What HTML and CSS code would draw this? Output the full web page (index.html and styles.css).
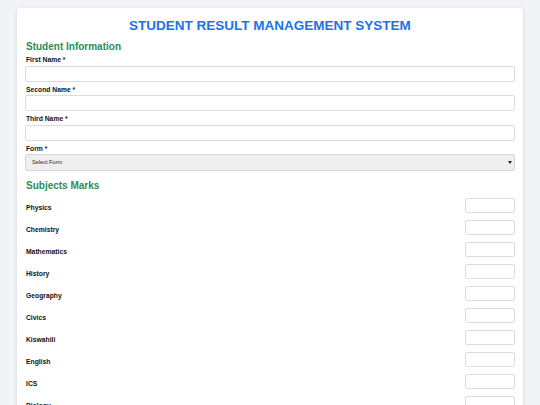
FILE: index.html
```html
<!DOCTYPE html>
<html lang="en">
<head>
<meta charset="utf-8">
<title>Student Result Management System</title>
<link rel="stylesheet" href="styles.css">
</head>
<body>
<div class="card">
  <h1 class="title">STUDENT RESULT MANAGEMENT SYSTEM</h1>
  <h2 class="section">Student Information</h2>
  <div class="field">
    <label class="label">First Name *</label>
    <input class="text-input" type="text">
  </div>
  <div class="field">
    <label class="label">Second Name *</label>
    <input class="text-input" type="text">
  </div>
  <div class="field">
    <label class="label">Third Name *</label>
    <input class="text-input" type="text">
  </div>
  <div class="field">
    <label class="label">Form *</label>
    <div class="select-wrap">
      <select class="select-input"><option>Select Form</option></select>
    </div>
  </div>
  <h2 class="section section-subjects">Subjects Marks</h2>
  <div class="subjects">
    <div class="subject-row"><span class="subject-name">Physics</span><input class="mark-input" type="text"></div>
    <div class="subject-row"><span class="subject-name">Chemistry</span><input class="mark-input" type="text"></div>
    <div class="subject-row"><span class="subject-name">Mathematics</span><input class="mark-input" type="text"></div>
    <div class="subject-row"><span class="subject-name">History</span><input class="mark-input" type="text"></div>
    <div class="subject-row"><span class="subject-name">Geography</span><input class="mark-input" type="text"></div>
    <div class="subject-row"><span class="subject-name">Civics</span><input class="mark-input" type="text"></div>
    <div class="subject-row"><span class="subject-name">Kiswahili</span><input class="mark-input" type="text"></div>
    <div class="subject-row"><span class="subject-name">English</span><input class="mark-input" type="text"></div>
    <div class="subject-row"><span class="subject-name">ICS</span><input class="mark-input" type="text"></div>
    <div class="subject-row"><span class="subject-name">Biology</span><input class="mark-input" type="text"></div>
    <div class="subject-row"><span class="subject-name">Commerce</span><input class="mark-input" type="text"></div>
  </div>
</div>
</body>
</html>
```

FILE: styles.css
```css
html, body {
  margin: 0;
  padding: 0;
}
body {
  background: #f2f3f7;
  font-family: "Liberation Sans", Arial, sans-serif;
  color: #222;
  padding-top: 8px;
}
.card {
  width: 506px;
  margin: 0 auto;
  box-sizing: border-box;
  background: #fff;
  border-radius: 4px;
  box-shadow: 0 1px 4px rgba(0, 0, 0, 0.12);
  padding: 10px 8px 20px 8px;
}
.title {
  margin: 0;
  font-size: 13.5px;
  line-height: 16px;
  font-weight: bold;
  color: #1a73e8;
  text-align: center;
}
.section {
  margin: 7px 0 3px 1px;
  font-size: 10px;
  line-height: 12px;
  font-weight: bold;
  color: #2e8b57;
}
.section-subjects {
  margin-top: 9px;
  margin-bottom: 6.5px;
}
.field {
  display: flex;
  flex-direction: column;
  gap: 1.5px;
  margin-bottom: 4px;
}
.label {
  margin-left: 1px;
  font-size: 6.75px;
  line-height: 8px;
  font-weight: bold;
  color: #111;
}
.text-input {
  box-sizing: border-box;
  width: 100%;
  height: 16px;
  margin: 0;
  border: 1px solid #dcdcdc;
  border-radius: 2px;
  background: #fff;
  padding: 0 4px;
}
.select-wrap {
  position: relative;
}
.select-wrap::after {
  content: "";
  position: absolute;
  right: 3px;
  top: 7px;
  width: 0;
  height: 0;
  border-left: 2px solid transparent;
  border-right: 2px solid transparent;
  border-top: 3px solid #222;
  pointer-events: none;
}
.select-input {
  display: block;
  -webkit-appearance: none;
  appearance: none;
  box-sizing: border-box;
  width: 100%;
  height: 16.5px;
  margin: 0;
  border: 1px solid #d6d6d6;
  border-radius: 2px;
  background: #efefef;
  font-family: "Liberation Sans", Arial, sans-serif;
  font-size: 5.6px;
  color: #222;
  padding: 0 0 0 6px;
}
.subjects {
  display: flex;
  flex-direction: column;
  gap: 6.7px;
}
.subject-row {
  display: flex;
  align-items: center;
  justify-content: space-between;
}
.subject-name {
  margin-left: 1px;
  padding-top: 4px;
  font-size: 6.75px;
  line-height: 8px;
  font-weight: bold;
  color: #111;
}
.mark-input {
  box-sizing: border-box;
  width: 50.5px;
  height: 15.3px;
  margin: 0;
  border: 1px solid #dcdcdc;
  border-radius: 2px;
  background: #fff;
}
```
